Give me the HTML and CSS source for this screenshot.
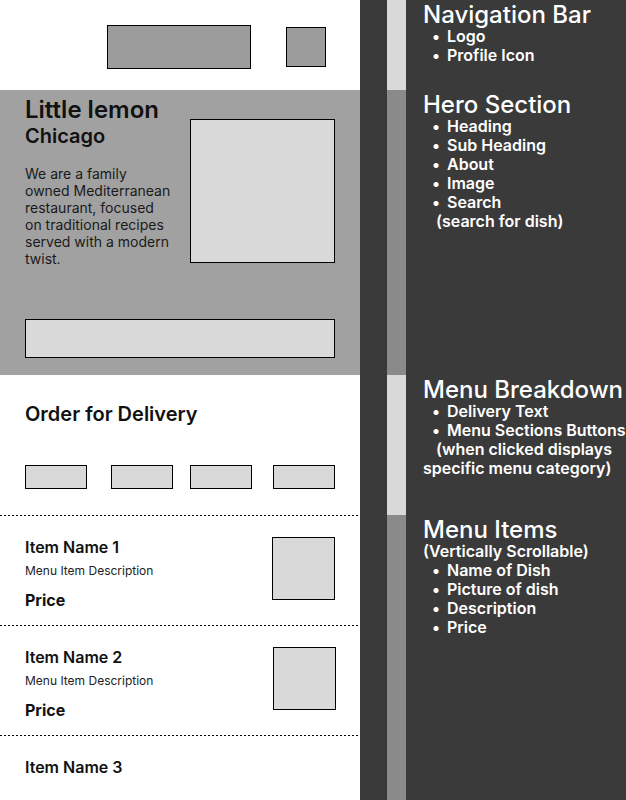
FILE: index.html
```html
<!DOCTYPE html>
<html lang="en">
<head>
    <meta charset="UTF-8">
    <meta name="viewport" content="width=device-width, initial-scale=1.0">
    <title>Little Lemon Wireframe</title>
    <link rel="stylesheet" href="styles.css">
</head>
<body>
    <div class="board">
        <div class="mobile">
            <nav class="nav">
                <div class="logo"></div>
                <div class="profile"></div>
            </nav>
            <section class="hero">
                <div class="hero-top">
                    <div class="hero-text">
                        <h1>Little lemon</h1>
                        <h2>Chicago</h2>
                        <p>We are a family owned Mediterranean restaurant, focused on traditional recipes served with a modern twist.</p>
                    </div>
                    <div class="hero-image"></div>
                </div>
                <div class="search"></div>
            </section>
            <section class="breakdown">
                <h3>Order for Delivery</h3>
                <div class="tabs">
                    <div class="tab"></div>
                    <div class="tab"></div>
                    <div class="tab"></div>
                    <div class="tab"></div>
                </div>
            </section>
            <section class="items">
                <div class="item">
                    <div class="item-text">
                        <h4>Item Name 1</h4>
                        <p class="desc">Menu Item Description</p>
                        <p class="price">Price</p>
                    </div>
                    <div class="thumb"></div>
                </div>
                <div class="item">
                    <div class="item-text">
                        <h4>Item Name 2</h4>
                        <p class="desc">Menu Item Description</p>
                        <p class="price">Price</p>
                    </div>
                    <div class="thumb thumb-2"></div>
                </div>
                <div class="item">
                    <div class="item-text">
                        <h4>Item Name 3</h4>
                    </div>
                </div>
            </section>
        </div>

        <div class="notes">
            <div class="note note-nav">
                <div class="stripe light"></div>
                <div class="note-text">
                    <h5>Navigation Bar</h5>
                    <ul>
                        <li>Logo</li>
                        <li>Profile Icon</li>
                    </ul>
                </div>
            </div>
            <div class="note note-hero">
                <div class="stripe dark"></div>
                <div class="note-text">
                    <h5>Hero Section</h5>
                    <ul>
                        <li>Heading</li>
                        <li>Sub Heading</li>
                        <li>About</li>
                        <li>Image</li>
                        <li>Search</li>
                    </ul>
                    <div class="extra indent">(search for dish)</div>
                </div>
            </div>
            <div class="note note-menu">
                <div class="stripe light"></div>
                <div class="note-text">
                    <h5>Menu Breakdown</h5>
                    <ul>
                        <li>Delivery Text</li>
                        <li>Menu Sections Buttons</li>
                    </ul>
                    <div class="extra indent">(when clicked displays</div>
                    <div class="extra">specific menu category)</div>
                </div>
            </div>
            <div class="note note-items">
                <div class="stripe dark"></div>
                <div class="note-text">
                    <h5>Menu Items</h5>
                    <div class="extra">(Vertically Scrollable)</div>
                    <ul>
                        <li>Name of Dish</li>
                        <li>Picture of dish</li>
                        <li>Description</li>
                        <li>Price</li>
                    </ul>
                </div>
            </div>
        </div>
    </div>
</body>
</html>
```

FILE: styles.css
```css
* {
    box-sizing: border-box;
}
body {
    margin: 0;
    font-family: 'Inter', 'Liberation Sans', sans-serif;
    background-color: #3a3a3a;
    overflow: hidden;
}
h1, h2, h3, h4, h5, p, ul {
    margin: 0;
    padding: 0;
}
.board {
    display: flex;
    width: 626px;
    height: 800px;
    overflow: hidden;
}
.mobile {
    width: 360px;
    flex-shrink: 0;
    background-color: white;
    color: #111;
}

/* nav */
.nav {
    height: 90px;
    display: flex;
    align-items: flex-start;
    padding: 25px 0 0 107px;
    gap: 35px;
}
.logo {
    width: 144px;
    height: 44px;
    background-color: #9c9c9c;
    border: 1px solid #000;
}
.profile {
    width: 40px;
    height: 40px;
    margin-top: 2px;
    background-color: #9c9c9c;
    border: 1px solid #000;
}

/* hero */
.hero {
    height: 285px;
    background-color: #a1a1a1;
    padding: 6px 25px 0;
}
.hero-top {
    display: flex;
    justify-content: space-between;
    height: 223px;
}
.hero-text {
    width: 146px;
}
.hero h1 {
    font-size: 24px;
    font-weight: 600;
    line-height: 28px;
}
.hero h2 {
    font-size: 20px;
    font-weight: 600;
    line-height: 24px;
}
.hero p {
    margin-top: 17px;
    font-size: 14px;
    line-height: 17px;
    color: #1a1a1a;
}
.hero-image {
    width: 145px;
    height: 144px;
    margin-top: 23px;
    background-color: #d9d9d9;
    border: 1px solid #000;
}
.search {
    height: 39px;
    background-color: #d9d9d9;
    border: 1px solid #000;
}

/* menu breakdown */
.breakdown {
    height: 140px;
    padding: 27px 25px 0;
}
.breakdown h3 {
    font-size: 20px;
    font-weight: 600;
    line-height: 24px;
}
.tabs {
    display: flex;
    margin-top: 39px;
}
.tab {
    width: 62px;
    height: 24px;
    background-color: #d9d9d9;
    border: 1px solid #000;
}
.tab:nth-child(2) { margin-left: 24px; }
.tab:nth-child(3) { margin-left: 17px; }
.tab:nth-child(4) { margin-left: 21px; }

/* items */
.item {
    height: 110px;
    display: flex;
    justify-content: space-between;
    padding: 22px 25px 0;
    background-image: repeating-linear-gradient(90deg, #000 0 2px, transparent 2px 4px);
    background-size: 100% 1px;
    background-repeat: no-repeat;
}
.item h4 {
    font-size: 16px;
    font-weight: 600;
    line-height: 19px;
    margin-top: 1px;
}
.desc {
    margin-top: 6px;
    font-size: 12px;
    line-height: 15px;
    color: #222;
}
.price {
    margin-top: 12px;
    font-size: 16px;
    font-weight: 700;
    line-height: 20px;
}
.thumb {
    width: 63px;
    height: 63px;
    background-color: #d9d9d9;
    border: 1px solid #000;
}
.thumb-2 {
    margin-right: -1px;
}

/* notes */
.notes {
    flex: 1;
    display: flex;
    flex-direction: column;
    color: #fff;
    white-space: nowrap;
}
.note {
    display: flex;
}
.note-nav { height: 90px; }
.note-hero { height: 285px; }
.note-menu { height: 140px; }
.note-items { height: 285px; }
.stripe {
    width: 19px;
    margin-left: 27px;
    flex-shrink: 0;
}
.stripe.light { background-color: #d9d9d9; }
.stripe.dark { background-color: #8a8a8a; }
.note-text {
    padding: 3px 0 0 17px;
    font-size: 16px;
    font-weight: 600;
    line-height: 19px;
}
.note-text h5 {
    font-size: 24px;
    font-weight: 500;
    line-height: 24px;
}
.note-text ul {
    list-style: none;
}
.note-text li {
    padding-left: 9px;
}
.note-text li::before {
    content: "\2022";
    display: inline-block;
    width: 15px;
}
.indent {
    padding-left: 13px;
}
```
